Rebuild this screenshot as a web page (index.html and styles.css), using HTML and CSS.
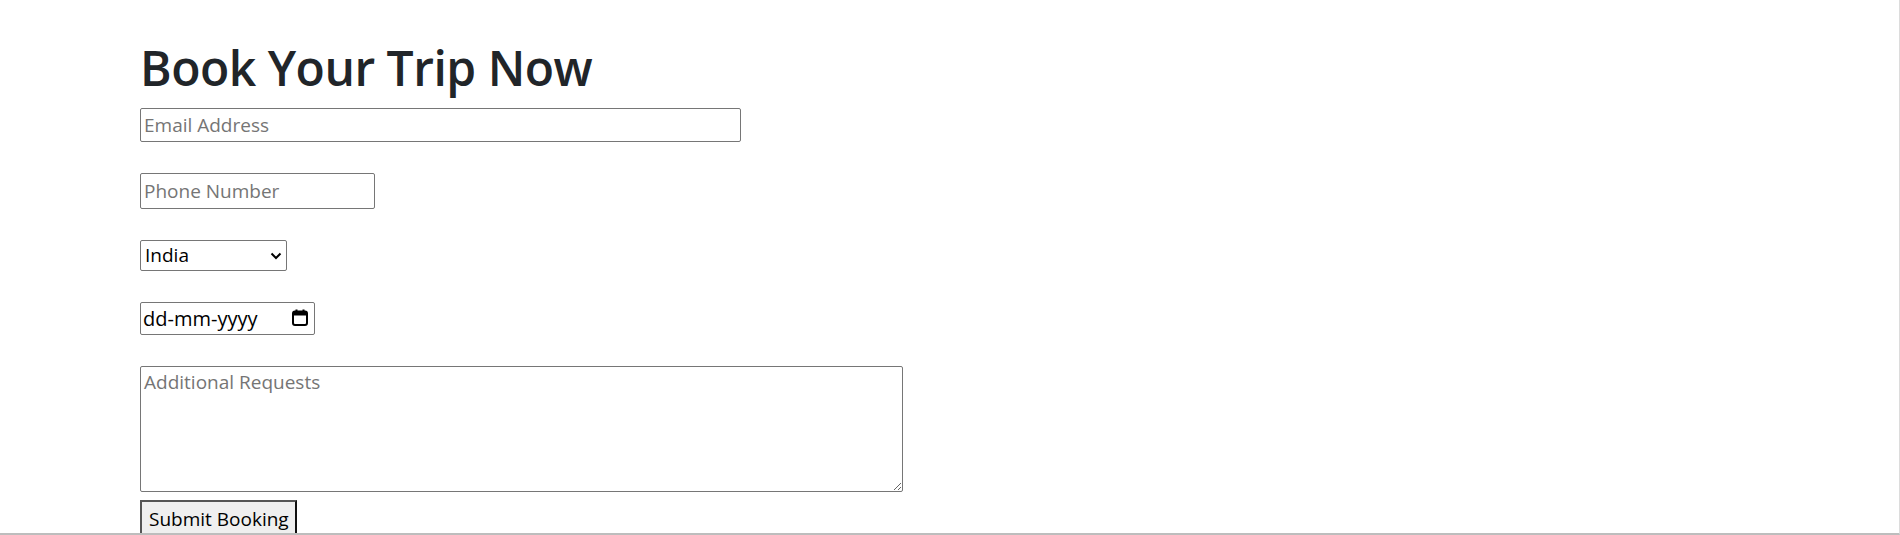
FILE: index.html
```html
<!DOCTYPE html>
<html lang="en">
<head>
<meta charset="utf-8">
<title>Book Your Trip Now</title>
<link rel="stylesheet" href="styles.css">
</head>
<body>
<main class="container">
  <h1 class="title">Book Your Trip Now</h1>
  <form class="booking-form">
    <input class="field field-email" type="email" placeholder="Email Address">
    <input class="field field-phone" type="tel" placeholder="Phone Number">
    <span class="select-wrap">
      <select class="field field-select">
        <option>India</option>
        <option>USA</option>
        <option>UK</option>
      </select>
      <svg class="chevron" width="12" height="8" viewBox="0 0 12 8"><path d="M1.5 1.5 L6 6 L10.5 1.5" fill="none" stroke="#000" stroke-width="2"/></svg>
    </span>
    <span class="date-wrap">
      <input class="field field-date" type="text" value="dd-mm-yyyy" readonly>
      <svg class="calendar" width="16" height="17" viewBox="0 0 16 17"><rect x="1" y="2.5" width="14" height="13.5" rx="2" fill="none" stroke="#000" stroke-width="2"/><rect x="1" y="2.5" width="14" height="4" fill="#000"/><rect x="3.5" y="0.5" width="2" height="3" fill="#000"/><rect x="10.5" y="0.5" width="2" height="3" fill="#000"/></svg>
    </span>
    <textarea class="field field-notes" placeholder="Additional Requests"></textarea>
    <button class="submit" type="button">Submit Booking</button>
  </form>
</main>
<div class="window-edge"></div>
</body>
</html>
```

FILE: styles.css
```css
html, body {
  margin: 0;
  padding: 0;
  background: #ffffff;
}

body {
  font-family: "Open Sans", "Noto Sans", "Liberation Sans", sans-serif;
  font-size: 20px;
  color: #212529;
}

.container {
  max-width: 1650px;
  margin: 0 auto;
  padding: 38px 15px 0;
  box-sizing: border-box;
}

.title {
  margin: 0 0 10px;
  font-size: 48px;
  font-weight: 600;
  line-height: 60px;
  color: #212529;
  letter-spacing: -0.5px;
}

.booking-form {
  display: flex;
  flex-direction: column;
  align-items: flex-start;
  gap: 31px;
}

.field {
  box-sizing: border-box;
  margin: 0;
  border: 1px solid #767676;
  border-radius: 2px;
  background: #ffffff;
  font-family: inherit;
  font-size: 19px;
  color: #000;
  padding: 0 3px;
  outline: none;
}

.field::placeholder {
  color: #757575;
  opacity: 1;
}

.field-email {
  width: 601px;
  height: 34px;
}

.field-phone {
  width: 235px;
  height: 36px;
}

.select-wrap,
.date-wrap {
  position: relative;
  display: inline-block;
}

.field-select {
  appearance: none;
  -webkit-appearance: none;
  width: 147px;
  height: 31px;
  padding: 0 4px;
  line-height: 29px;
}

.chevron {
  position: absolute;
  right: 5px;
  top: 12px;
  pointer-events: none;
}

.field-date {
  width: 175px;
  height: 33px;
  padding: 0 2px;
  font-size: 20px;
}

.calendar {
  position: absolute;
  right: 7px;
  top: 7px;
  pointer-events: none;
}

.field-notes {
  width: 763px;
  height: 126px;
  padding: 2px 3px;
  resize: both;
  display: block;
}

.submit {
  margin-top: -23px;
  box-sizing: border-box;
  width: 157px;
  height: 38px;
  padding: 0 7px;
  background: #efefef;
  border-style: solid;
  border-width: 2px;
  border-color: #555555 #111111 #111111 #555555;
  border-radius: 0;
  font-family: inherit;
  font-size: 19px;
  color: #000;
  text-align: left;
  white-space: nowrap;
  overflow: hidden;
}

.window-edge {
  position: fixed;
  inset: 0;
  border-right: 1px solid #dcdcdc;
  border-bottom: 2px solid #bdbdbd;
  pointer-events: none;
}
```
